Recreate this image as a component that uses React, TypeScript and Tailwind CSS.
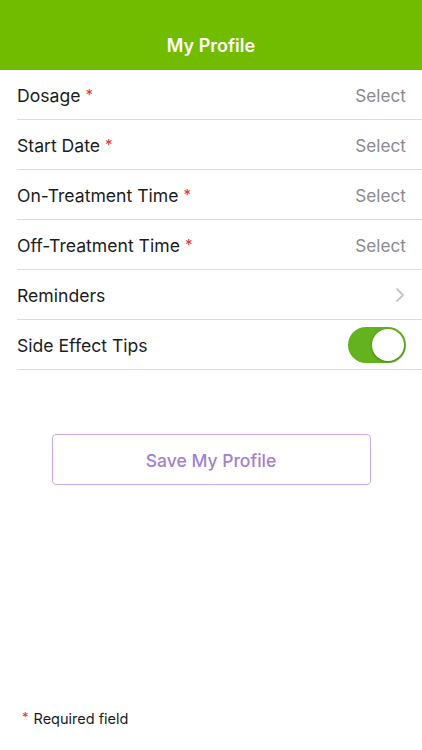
import React from "react";

const Star = () => <span className="text-[#e0303a] ml-[5px] text-[15px] relative -top-[2px]">*</span>;

function Row({ label, req, right }: { label: string; req?: boolean; right: React.ReactNode }) {
  return (
    <div className="pl-[17px]">
      <div className="h-[50px] flex items-center justify-between pr-[16px] pt-[3px] border-b border-[#dcdce0]">
        <div className="text-[17.6px] text-[#1c1c1e]">
          {label}
          {req && <Star />}
        </div>
        {right}
      </div>
    </div>
  );
}

export default function App() {
  const sel = <span className="text-[17.2px] text-[#8a8a8e]">Select</span>;
  return (
    <div className="w-[422px] h-[750px] bg-white flex flex-col" style={{ fontFamily: "Inter, 'Noto Sans', sans-serif" }}>
      <div className="h-[70px] bg-[#72bc00] flex items-end justify-center pb-[11px]">
        <span className="text-white font-semibold text-[18px]">My Profile</span>
      </div>
      <Row label="Dosage" req right={sel} />
      <Row label="Start Date" req right={sel} />
      <Row label="On-Treatment Time" req right={sel} />
      <Row label="Off-Treatment Time" req right={sel} />
      <Row
        label="Reminders"
        right={
          <svg width="10" height="16" viewBox="0 0 10 16" className="mr-[1px] -mt-[3px]">
            <path d="M2 2l6 6-6 6" fill="none" stroke="#c4c4c8" strokeWidth="1.8" strokeLinecap="round" strokeLinejoin="round" />
          </svg>
        }
      />
      <Row
        label="Side Effect Tips"
        right={
          <div className="w-[58px] h-[36px] rounded-full bg-[#63b21e] relative -mt-[3px]">
            <div className="absolute right-[2px] top-[2px] w-[32px] h-[32px] rounded-full bg-white shadow-[0_1px_3px_rgba(0,0,0,0.25)]" />
          </div>
        }
      />
      <div className="flex justify-center mt-[64px]">
        <div className="w-[319px] h-[51px] rounded-[4px] border-[1.5px] border-[#c9a8e3] flex items-center justify-center pt-[3px]">
          <span className="text-[#a47fd0] text-[17.5px] font-medium">Save My Profile</span>
        </div>
      </div>
      <div className="flex-1" />
      <div className="pl-[22px] pb-[20px] flex items-center text-[14.5px] text-[#1c1c1e]">
        <span className="text-[#e0303a] mr-[5px] text-[13px] relative -top-[1px]">*</span>
        Required field
      </div>
    </div>
  );
}
